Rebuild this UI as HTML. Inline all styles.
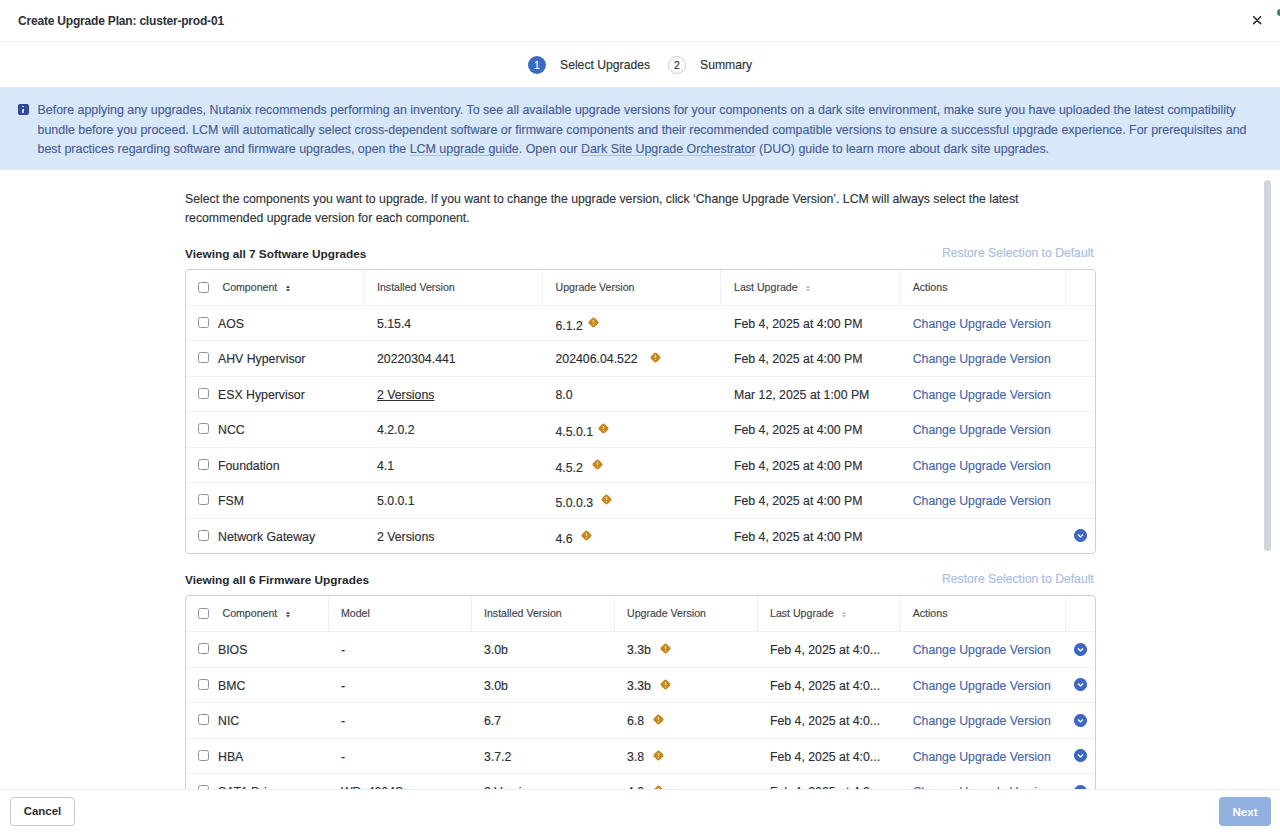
<!DOCTYPE html>
<html><head><meta charset="utf-8">
<style>
*{box-sizing:border-box;margin:0;padding:0}
html,body{width:1280px;height:834px;overflow:hidden;background:#fff}
body{font-family:"Liberation Sans",sans-serif;color:#2f3338;position:relative;-webkit-text-stroke:0.15px currentColor}
.abs{position:absolute;white-space:nowrap}
#hdr{position:absolute;left:0;top:0;width:1280px;height:42px;border-bottom:1px solid #eceef0}
#title{-webkit-text-stroke:0;left:18px;top:12.6px;font-size:12px;letter-spacing:-0.19px;font-weight:bold;color:#2d3136;line-height:16px}
#close{left:1251px;top:14px;width:12px;height:12px}
#dot{left:1276.5px;top:8.8px;width:7px;height:7px;border-radius:50%;background:#3f8a50}
.step{position:absolute;top:56px;width:18px;height:18px;border-radius:50%;font-size:10.5px;line-height:18px;text-align:center}
#s1{left:528px;background:#3c6bc6;color:#fff}
#s2{left:668px;border:1px solid #c9ced6;color:#33383e;line-height:16px;background:#fff}
.stxt{top:57px;font-size:12.2px;line-height:16px;color:#2f3338}
#banner{position:absolute;left:0;top:87px;width:1280px;height:83px;background:#d9e8f8}
#binfo{left:18px;top:104px;width:11px;height:11px;border-radius:2px;background:#30489a}
#binfo:before{content:"";position:absolute;left:4.2px;top:1.9px;width:1.9px;height:1.6px;background:#cadcf4}
#binfo:after{content:"";position:absolute;left:4.2px;top:4.5px;width:1.9px;height:4.4px;background:#cadcf4}
.btxt{left:37.5px;font-size:12.43px;line-height:19.5px;color:#465d97}
.btxt u{text-decoration:underline;text-decoration-color:#aebfdf;text-underline-offset:1.5px}
.body{left:185px;font-size:12.26px;line-height:19px;color:#30353a}
.sec{-webkit-text-stroke:0;left:185px;font-size:11.8px;font-weight:bold;color:#24282d;line-height:16px}
.restore{font-size:12.2px;color:#a9bde2;line-height:16px;left:942px}
.tbl{position:absolute;left:185px;width:911px;border:1px solid #cfd0d3;border-radius:4px;overflow:hidden;background:#fff}
.row{position:relative;height:35.5px;border-top:1px solid #eef0f2}
.row.h{border-top:none;height:35px}
.cell{position:absolute;top:0;height:100%;white-space:nowrap}
.h .cell{font-size:10.6px;color:#3e434a;line-height:35px}
.h .div{position:absolute;top:0;width:1px;height:100%;background:#eef0f2}
.r .cell{font-size:12.3px;color:#2c3035;line-height:35px}
.fw .r .cell{line-height:36px}
.sw .r .cell{line-height:36px}
.cb{position:absolute;left:12px;top:12px;width:11px;height:11px;border:1.3px solid #8f9396;border-radius:2.5px;background:#fff}
.r .cb{top:11.3px}
.lnk{color:#4567a8}
.warn{display:inline-block;position:absolute;width:11px;height:11px}
.chev{position:absolute;width:13px;height:13px;border-radius:50%;background:#3d68c2}
#footer{position:absolute;left:0;top:789px;width:1280px;height:45px;background:#fff;border-top:1px solid #eceef0}
#cancel{-webkit-text-stroke:0;left:10px;top:797px;width:65px;height:29px;border:1px solid #cacbcf;border-radius:4px;background:#fff;font-size:11.4px;font-weight:bold;color:#2a2e33;line-height:27px;text-align:center}
#next{-webkit-text-stroke:0;left:1219px;top:797px;width:52px;height:29px;border-radius:4px;background:#92b1e1;font-size:11.6px;font-weight:bold;color:#fff;line-height:29px;text-align:center}
#sb{left:1264px;top:180px;width:7px;height:371px;border-radius:4px;background:#d3d5dd}
</style></head><body>
<div id="hdr"></div>
<div class="abs" id="title">Create Upgrade Plan: cluster-prod-01</div>
<svg class="abs" id="close" viewBox="0 0 12 12"><path d="M2.7 2.7L9.6 9.6M9.6 2.7L2.7 9.6" stroke="#2a2e33" stroke-width="1.6" stroke-linecap="round"/></svg>
<div class="abs" id="dot"></div>

<div class="step" id="s1">1</div>
<div class="abs stxt" style="left:560px">Select Upgrades</div>
<div class="step" id="s2">2</div>
<div class="abs stxt" style="left:700px">Summary</div>

<div id="banner"></div>
<div class="abs" id="binfo"></div>
<div class="abs btxt" style="top:101px">Before applying any upgrades, Nutanix recommends performing an inventory. To see all available upgrade versions for your components on a dark site environment, make sure you have uploaded the latest compatibility</div>
<div class="abs btxt" style="top:120.5px">bundle before you proceed. LCM will automatically select cross-dependent software or firmware components and their recommended compatible versions to ensure a successful upgrade experience. For prerequisites and</div>
<div class="abs btxt" style="top:140px">best practices regarding software and firmware upgrades, open the <u>LCM upgrade guide</u>. Open our <u>Dark Site Upgrade Orchestrator</u> (DUO) guide to learn more about dark site upgrades.</div>

<div class="abs body" style="top:190.3px">Select the components you want to upgrade. If you want to change the upgrade version, click ‘Change Upgrade Version’. LCM will always select the latest</div>
<div class="abs body" style="top:209.3px">recommended upgrade version for each component.</div>

<!--SOFTWARE-->
<div class="abs sec" style="top:246px">Viewing all 7 Software Upgrades</div>
<div class="abs restore" style="top:245px">Restore Selection to Default</div>
<div class="tbl sw" style="top:268.5px;height:285.5px">
<div class="row h">
<div class="div" style="left:177px"></div>
<div class="div" style="left:355.9px"></div>
<div class="div" style="left:533.9px"></div>
<div class="div" style="left:713px"></div>
<div class="div" style="left:878.5px"></div>
<div class="cb"></div>
<div class="cell" style="left:36.5px">Component</div>
<svg style="position:absolute;left:100px;top:15px;width:4px;height:7px" viewBox="0 0 4 7"><path d="M0 2.9 L2 0.4 L4 2.9 Z M0 4.1 L2 6.6 L4 4.1 Z" fill="#3e434a"/></svg>
<div class="cell" style="left:191px">Installed Version</div>
<div class="cell" style="left:369.5px">Upgrade Version</div>
<div class="cell" style="left:548px">Last Upgrade</div>
<svg style="position:absolute;left:620px;top:15px;width:4px;height:7px" viewBox="0 0 4 7"><path d="M0 2.9 L2 0.4 L4 2.9 Z M0 4.1 L2 6.6 L4 4.1 Z" fill="#b9bdc3"/></svg>
<div class="cell" style="left:726.7px">Actions</div>
</div>
<div class="row r">
<div class="cb"></div>
<div class="cell" style="left:32px">AOS</div>
<div class="cell" style="left:191px">5.15.4</div>
<div class="cell" style="left:369.5px;top:2px">6.1.2</div>
<svg class="warn" style="left:402px;top:11px" viewBox="0 0 11 11"><rect x="1.4" y="1.4" width="8.2" height="8.2" rx="2.1" transform="rotate(45 5.5 5.5)" fill="#c5891f"/><rect x="4.85" y="2.7" width="1.3" height="3.4" rx="0.4" fill="#f3d9a6"/><rect x="4.85" y="6.9" width="1.3" height="1.3" rx="0.4" fill="#f3d9a6"/></svg>
<div class="cell" style="left:548px">Feb 4, 2025 at 4:00 PM</div>
<div class="cell" style="left:726.7px"><span class="lnk">Change Upgrade Version</span></div>
</div>
<div class="row r">
<div class="cb"></div>
<div class="cell" style="left:32px">AHV Hypervisor</div>
<div class="cell" style="left:191px">20220304.441</div>
<div class="cell" style="left:369.5px;">202406.04.522</div>
<svg class="warn" style="left:464px;top:11px" viewBox="0 0 11 11"><rect x="1.4" y="1.4" width="8.2" height="8.2" rx="2.1" transform="rotate(45 5.5 5.5)" fill="#c5891f"/><rect x="4.85" y="2.7" width="1.3" height="3.4" rx="0.4" fill="#f3d9a6"/><rect x="4.85" y="6.9" width="1.3" height="1.3" rx="0.4" fill="#f3d9a6"/></svg>
<div class="cell" style="left:548px">Feb 4, 2025 at 4:00 PM</div>
<div class="cell" style="left:726.7px"><span class="lnk">Change Upgrade Version</span></div>
</div>
<div class="row r">
<div class="cb"></div>
<div class="cell" style="left:32px">ESX Hypervisor</div>
<div class="cell" style="left:191px"><u>2 Versions</u></div>
<div class="cell" style="left:369.5px">8.0</div>
<div class="cell" style="left:548px">Mar 12, 2025 at 1:00 PM</div>
<div class="cell" style="left:726.7px"><span class="lnk">Change Upgrade Version</span></div>
</div>
<div class="row r">
<div class="cb"></div>
<div class="cell" style="left:32px">NCC</div>
<div class="cell" style="left:191px">4.2.0.2</div>
<div class="cell" style="left:369.5px;top:2px">4.5.0.1</div>
<svg class="warn" style="left:412px;top:11px" viewBox="0 0 11 11"><rect x="1.4" y="1.4" width="8.2" height="8.2" rx="2.1" transform="rotate(45 5.5 5.5)" fill="#c5891f"/><rect x="4.85" y="2.7" width="1.3" height="3.4" rx="0.4" fill="#f3d9a6"/><rect x="4.85" y="6.9" width="1.3" height="1.3" rx="0.4" fill="#f3d9a6"/></svg>
<div class="cell" style="left:548px">Feb 4, 2025 at 4:00 PM</div>
<div class="cell" style="left:726.7px"><span class="lnk">Change Upgrade Version</span></div>
</div>
<div class="row r">
<div class="cb"></div>
<div class="cell" style="left:32px">Foundation</div>
<div class="cell" style="left:191px">4.1</div>
<div class="cell" style="left:369.5px;top:2px">4.5.2</div>
<svg class="warn" style="left:406px;top:11px" viewBox="0 0 11 11"><rect x="1.4" y="1.4" width="8.2" height="8.2" rx="2.1" transform="rotate(45 5.5 5.5)" fill="#c5891f"/><rect x="4.85" y="2.7" width="1.3" height="3.4" rx="0.4" fill="#f3d9a6"/><rect x="4.85" y="6.9" width="1.3" height="1.3" rx="0.4" fill="#f3d9a6"/></svg>
<div class="cell" style="left:548px">Feb 4, 2025 at 4:00 PM</div>
<div class="cell" style="left:726.7px"><span class="lnk">Change Upgrade Version</span></div>
</div>
<div class="row r">
<div class="cb"></div>
<div class="cell" style="left:32px">FSM</div>
<div class="cell" style="left:191px">5.0.0.1</div>
<div class="cell" style="left:369.5px;top:2px">5.0.0.3</div>
<svg class="warn" style="left:415px;top:11px" viewBox="0 0 11 11"><rect x="1.4" y="1.4" width="8.2" height="8.2" rx="2.1" transform="rotate(45 5.5 5.5)" fill="#c5891f"/><rect x="4.85" y="2.7" width="1.3" height="3.4" rx="0.4" fill="#f3d9a6"/><rect x="4.85" y="6.9" width="1.3" height="1.3" rx="0.4" fill="#f3d9a6"/></svg>
<div class="cell" style="left:548px">Feb 4, 2025 at 4:00 PM</div>
<div class="cell" style="left:726.7px"><span class="lnk">Change Upgrade Version</span></div>
</div>
<div class="row r">
<div class="cb"></div>
<div class="cell" style="left:32px">Network Gateway</div>
<div class="cell" style="left:191px">2 Versions</div>
<div class="cell" style="left:369.5px;top:2px">4.6</div>
<svg class="warn" style="left:395px;top:11px" viewBox="0 0 11 11"><rect x="1.4" y="1.4" width="8.2" height="8.2" rx="2.1" transform="rotate(45 5.5 5.5)" fill="#c5891f"/><rect x="4.85" y="2.7" width="1.3" height="3.4" rx="0.4" fill="#f3d9a6"/><rect x="4.85" y="6.9" width="1.3" height="1.3" rx="0.4" fill="#f3d9a6"/></svg>
<div class="cell" style="left:548px">Feb 4, 2025 at 4:00 PM</div>
<div class="cell" style="left:726.7px;"></div>
<svg class="chev" style="left:888px;top:10.5px" viewBox="0 0 13 13"><circle cx="6.5" cy="6.5" r="6.5" fill="#3d68c2"/><path d="M4 5.5 L6.5 7.9 L9 5.5" fill="none" stroke="#fff" stroke-width="1.4"/></svg>
</div>
</div>
<!--/SOFTWARE-->
<!--FIRMWARE-->
<div class="abs sec" style="top:572px">Viewing all 6 Firmware Upgrades</div>
<div class="abs restore" style="top:571px">Restore Selection to Default</div>
<div class="tbl fw" style="top:595px;height:214.5px">
<div class="row h">
<div class="div" style="left:142px"></div>
<div class="div" style="left:285px"></div>
<div class="div" style="left:428px"></div>
<div class="div" style="left:571px"></div>
<div class="div" style="left:713px"></div>
<div class="div" style="left:878.5px"></div>
<div class="cb"></div>
<div class="cell" style="left:36.5px">Component</div>
<svg style="position:absolute;left:100px;top:15px;width:4px;height:7px" viewBox="0 0 4 7"><path d="M0 2.9 L2 0.4 L4 2.9 Z M0 4.1 L2 6.6 L4 4.1 Z" fill="#3e434a"/></svg>
<div class="cell" style="left:155px">Model</div>
<div class="cell" style="left:298px">Installed Version</div>
<div class="cell" style="left:441px">Upgrade Version</div>
<div class="cell" style="left:584px">Last Upgrade</div>
<svg style="position:absolute;left:656px;top:15px;width:4px;height:7px" viewBox="0 0 4 7"><path d="M0 2.9 L2 0.4 L4 2.9 Z M0 4.1 L2 6.6 L4 4.1 Z" fill="#b9bdc3"/></svg>
<div class="cell" style="left:726.7px">Actions</div>
</div>
<div class="row r">
<div class="cb"></div>
<div class="cell" style="left:32px">BIOS</div>
<div class="cell" style="left:155px">-</div>
<div class="cell" style="left:298px">3.0b</div>
<div class="cell" style="left:441px;">3.3b</div>
<svg class="warn" style="left:474px;top:11px" viewBox="0 0 11 11"><rect x="1.4" y="1.4" width="8.2" height="8.2" rx="2.1" transform="rotate(45 5.5 5.5)" fill="#c5891f"/><rect x="4.85" y="2.7" width="1.3" height="3.4" rx="0.4" fill="#f3d9a6"/><rect x="4.85" y="6.9" width="1.3" height="1.3" rx="0.4" fill="#f3d9a6"/></svg>
<div class="cell" style="left:584px">Feb 4, 2025 at 4:0...</div>
<div class="cell" style="left:726.7px;"><span class="lnk">Change Upgrade Version</span></div>
<svg class="chev" style="left:888px;top:10.5px" viewBox="0 0 13 13"><circle cx="6.5" cy="6.5" r="6.5" fill="#3d68c2"/><path d="M4 5.5 L6.5 7.9 L9 5.5" fill="none" stroke="#fff" stroke-width="1.4"/></svg>
</div>
<div class="row r">
<div class="cb"></div>
<div class="cell" style="left:32px">BMC</div>
<div class="cell" style="left:155px">-</div>
<div class="cell" style="left:298px">3.0b</div>
<div class="cell" style="left:441px;">3.3b</div>
<svg class="warn" style="left:474px;top:11px" viewBox="0 0 11 11"><rect x="1.4" y="1.4" width="8.2" height="8.2" rx="2.1" transform="rotate(45 5.5 5.5)" fill="#c5891f"/><rect x="4.85" y="2.7" width="1.3" height="3.4" rx="0.4" fill="#f3d9a6"/><rect x="4.85" y="6.9" width="1.3" height="1.3" rx="0.4" fill="#f3d9a6"/></svg>
<div class="cell" style="left:584px">Feb 4, 2025 at 4:0...</div>
<div class="cell" style="left:726.7px;"><span class="lnk">Change Upgrade Version</span></div>
<svg class="chev" style="left:888px;top:10.5px" viewBox="0 0 13 13"><circle cx="6.5" cy="6.5" r="6.5" fill="#3d68c2"/><path d="M4 5.5 L6.5 7.9 L9 5.5" fill="none" stroke="#fff" stroke-width="1.4"/></svg>
</div>
<div class="row r">
<div class="cb"></div>
<div class="cell" style="left:32px">NIC</div>
<div class="cell" style="left:155px">-</div>
<div class="cell" style="left:298px">6.7</div>
<div class="cell" style="left:441px;">6.8</div>
<svg class="warn" style="left:467px;top:11px" viewBox="0 0 11 11"><rect x="1.4" y="1.4" width="8.2" height="8.2" rx="2.1" transform="rotate(45 5.5 5.5)" fill="#c5891f"/><rect x="4.85" y="2.7" width="1.3" height="3.4" rx="0.4" fill="#f3d9a6"/><rect x="4.85" y="6.9" width="1.3" height="1.3" rx="0.4" fill="#f3d9a6"/></svg>
<div class="cell" style="left:584px">Feb 4, 2025 at 4:0...</div>
<div class="cell" style="left:726.7px;"><span class="lnk">Change Upgrade Version</span></div>
<svg class="chev" style="left:888px;top:10.5px" viewBox="0 0 13 13"><circle cx="6.5" cy="6.5" r="6.5" fill="#3d68c2"/><path d="M4 5.5 L6.5 7.9 L9 5.5" fill="none" stroke="#fff" stroke-width="1.4"/></svg>
</div>
<div class="row r">
<div class="cb"></div>
<div class="cell" style="left:32px">HBA</div>
<div class="cell" style="left:155px">-</div>
<div class="cell" style="left:298px">3.7.2</div>
<div class="cell" style="left:441px;">3.8</div>
<svg class="warn" style="left:467px;top:11px" viewBox="0 0 11 11"><rect x="1.4" y="1.4" width="8.2" height="8.2" rx="2.1" transform="rotate(45 5.5 5.5)" fill="#c5891f"/><rect x="4.85" y="2.7" width="1.3" height="3.4" rx="0.4" fill="#f3d9a6"/><rect x="4.85" y="6.9" width="1.3" height="1.3" rx="0.4" fill="#f3d9a6"/></svg>
<div class="cell" style="left:584px">Feb 4, 2025 at 4:0...</div>
<div class="cell" style="left:726.7px;"><span class="lnk">Change Upgrade Version</span></div>
<svg class="chev" style="left:888px;top:10.5px" viewBox="0 0 13 13"><circle cx="6.5" cy="6.5" r="6.5" fill="#3d68c2"/><path d="M4 5.5 L6.5 7.9 L9 5.5" fill="none" stroke="#fff" stroke-width="1.4"/></svg>
</div>
<div class="row r">
<div class="cb"></div>
<div class="cell" style="left:32px">SATA Drive</div>
<div class="cell" style="left:155px">WDx4004S</div>
<div class="cell" style="left:298px">2 Versions</div>
<div class="cell" style="left:441px;">4.0</div>
<svg class="warn" style="left:467px;top:11px" viewBox="0 0 11 11"><rect x="1.4" y="1.4" width="8.2" height="8.2" rx="2.1" transform="rotate(45 5.5 5.5)" fill="#c5891f"/><rect x="4.85" y="2.7" width="1.3" height="3.4" rx="0.4" fill="#f3d9a6"/><rect x="4.85" y="6.9" width="1.3" height="1.3" rx="0.4" fill="#f3d9a6"/></svg>
<div class="cell" style="left:584px">Feb 4, 2025 at 4:0...</div>
<div class="cell" style="left:726.7px;"><span class="lnk">Change Upgrade Version</span></div>
<svg class="chev" style="left:888px;top:10.5px" viewBox="0 0 13 13"><circle cx="6.5" cy="6.5" r="6.5" fill="#3d68c2"/><path d="M4 5.5 L6.5 7.9 L9 5.5" fill="none" stroke="#fff" stroke-width="1.4"/></svg>
</div>
</div>
<!--/FIRMWARE-->

<div id="footer"></div>
<div class="abs" id="cancel">Cancel</div>
<div class="abs" id="next">Next</div>
<div class="abs" id="sb"></div>
</body></html>
